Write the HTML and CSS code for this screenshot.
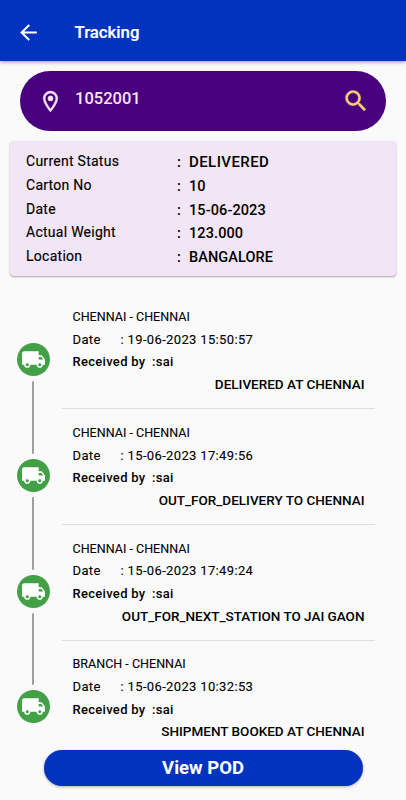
FILE: index.html
```html
<!DOCTYPE html>
<html lang="en">
<head>
<meta charset="utf-8">
<title>Tracking</title>
<link rel="stylesheet" href="styles.css">
</head>
<body>
<svg class="defs" aria-hidden="true">
  <symbol id="truck" viewBox="0 0 24 24"><path d="M20 8h-3V4H3c-1.100 0-2 .9-2 2v11h2c0 1.660 1.340 3 3 3s3-1.340 3-3h6c0 1.660 1.340 3 3 3s3-1.340 3-3h2v-5l-3-4zM6 18.500c-.83 0-1.500-.67-1.500-1.500s.67-1.500 1.500-1.500 1.500.67 1.500 1.500-.67 1.500-1.500 1.500zm13.500-9l1.960 2.500H17V9.500h2.500zM18 18.500c-.83 0-1.500-.67-1.500-1.500s.67-1.500 1.500-1.500 1.500.67 1.500 1.500-.67 1.500-1.500 1.500z"/></symbol>
</svg>
<header class="appbar">
  <svg class="back" viewBox="0 0 24 24"><path d="M20 11H7.830l5.590-5.590L12 4l-8 8 8 8 1.410-1.410L7.830 13H20v-2z"/></svg>
  <h1 class="title">Tracking</h1>
</header>
<div class="search">
  <svg class="pin" viewBox="0 0 24 24"><path d="M12 2C8.130 2 5 5.130 5 9c0 5.250 7 13 7 13s7-7.750 7-13c0-3.870-3.130-7-7-7zM7 9c0-2.760 2.240-5 5-5s5 2.240 5 5c0 2.880-2.880 7.190-5 9.880C9.920 16.210 7 11.850 7 9z"/><circle cx="12" cy="9" r="2.500"/></svg>
  <span class="number">1052001</span>
  <svg class="glass" viewBox="0 0 24 24"><path d="M15.500 14h-.79l-.28-.27C15.410 12.590 16 11.110 16 9.500 16 5.910 13.090 3 9.500 3S3 5.910 3 9.500 5.910 16 9.500 16c1.610 0 3.090-.59 4.230-1.570l.27.28v.79l5 4.990L20.490 19l-4.990-5zm-6 0C7.010 14 5 11.990 5 9.500S7.010 5 9.500 5 14 7.010 14 9.500 11.990 14 9.500 14z"/></svg>
</div>
<section class="card">
  <div class="labels"><div>Current Status</div><div>Carton No</div><div>Date</div><div>Actual Weight</div><div>Location</div></div>
  <div class="values"><div class="status"><i>:</i>DELIVERED</div><div><i>:</i>10</div><div><i>:</i>15-06-2023</div><div><i>:</i>123.000</div><div><i>:</i>BANGALORE</div></div>
</section>
<main class="timeline">
  <div class="rail">
    <div class="node"><svg><use href="#truck"/></svg></div><div class="link"></div>
    <div class="node"><svg><use href="#truck"/></svg></div><div class="link"></div>
    <div class="node"><svg><use href="#truck"/></svg></div><div class="link"></div>
    <div class="node"><svg><use href="#truck"/></svg></div>
  </div>
  <div class="events">
    <article class="event">
      <p class="route">CHENNAI - CHENNAI</p>
      <p class="date"><span>Date</span>: 19-06-2023 15:50:57</p>
      <p class="by"><span>Received by</span>:sai</p>
      <p class="state">DELIVERED AT CHENNAI</p>
    </article>
    <article class="event">
      <p class="route">CHENNAI - CHENNAI</p>
      <p class="date"><span>Date</span>: 15-06-2023 17:49:56</p>
      <p class="by"><span>Received by</span>:sai</p>
      <p class="state">OUT_FOR_DELIVERY TO CHENNAI</p>
    </article>
    <article class="event">
      <p class="route">CHENNAI - CHENNAI</p>
      <p class="date"><span>Date</span>: 15-06-2023 17:49:24</p>
      <p class="by"><span>Received by</span>:sai</p>
      <p class="state">OUT_FOR_NEXT_STATION TO JAI GAON</p>
    </article>
    <article class="event">
      <p class="route">BRANCH - CHENNAI</p>
      <p class="date"><span>Date</span>: 15-06-2023 10:32:53</p>
      <p class="by"><span>Received by</span>:sai</p>
      <p class="state">SHIPMENT BOOKED AT CHENNAI</p>
    </article>
  </div>
</main>
<button class="pod">View POD</button>
</body>
</html>
```
FILE: styles.css
```css
* { box-sizing: border-box; }
body {
  margin: 0;
  height: 800px;
  overflow: hidden;
  display: flex;
  flex-direction: column;
  background: #fafafa;
  color: #000;
  font-family: Roboto, "Liberation Sans", sans-serif;
}
p, h1 { margin: 0; }
svg { display: block; fill: currentColor; flex: none; }
.defs { width: 0; height: 0; position: absolute; }
.appbar {
  flex: none;
  height: 61px;
  display: flex;
  align-items: center;
  padding: 3px 0 0 16.300px;
  background: #0233bf;
  color: #fff;
  box-shadow: 0 1px 4px rgba(0, 0, 0, .4);
}
.back { width: 25px; height: 25px; }
.title { margin-left: 33.200px; font-size: 16.800px; font-weight: 500; line-height: 20px; -webkit-text-stroke: .2px; }
.search {
  flex: none;
  height: 60px;
  margin: 10px 20px 0;
  padding: 0 16.500px 0 18px;
  border-radius: 30px;
  background: #49007f;
  color: #fce4f8;
  display: flex;
  align-items: center;
}
.pin { width: 25px; height: 25px; stroke: currentColor; stroke-width: .3px; }
.number { margin: -5px auto 0 12px; font-size: 16.500px; font-weight: 500; }
.glass { width: 28px; height: 28px; color: #ffcf73; stroke: currentColor; stroke-width: .3px; }
.card {
  flex: none;
  height: 135px;
  margin: 10px 10px 0;
  padding: 8.500px 16px 0;
  border-radius: 4px;
  background: #f2e5f5;
  box-shadow: 0 1px 2px rgba(0, 0, 0, .35);
  display: flex;
  font-size: 14px;
}
.labels { width: 151px; padding-top: .5px; line-height: 23.800px; letter-spacing: .27px; -webkit-text-stroke: .15px; }
.values { line-height: 23.700px; font-size: 14.500px; font-weight: 500; letter-spacing: .1px; }
.values .status { height: 25.500px; line-height: 24px; font-size: 15px; letter-spacing: .42px; }
.values i { display: inline-block; width: 12px; font-style: normal; letter-spacing: 0; }
.timeline { flex: none; display: flex; margin-top: 17.250px; height: 457px; }
.rail { width: 33px; margin-left: 16.500px; padding-top: 49.750px; display: flex; flex-direction: column; align-items: center; }
.node {
  flex: none;
  width: 33px;
  height: 33px;
  border-radius: 50%;
  background: #43a047;
  color: #fff;
  display: flex;
  align-items: center;
  justify-content: center;
}
.node svg { width: 25px; height: 25px; }
.link { flex: none; width: 2.500px; height: 72.750px; margin: 5px 0; border-radius: 1px; background: #9e9e9e; }
.events { width: 313px; margin-left: 12.500px; }
.event {
  height: 115.750px;
  padding: 12.800px 10.500px 0 10.500px;
  border-bottom: 1px solid #dedede;
  font-size: 13px;
  line-height: 22.700px;
}
.event:last-child { border-bottom: 0; }
.event span { display: inline-block; }
.route { font-size: 12.500px; letter-spacing: .02px; -webkit-text-stroke: .1px; }
.date { letter-spacing: .35px; -webkit-text-stroke: .1px; }
.date span { width: 48px; }
.by { font-weight: 500; letter-spacing: .3px; }
.by span { width: 79.500px; }
.state { font-size: 13.500px; font-weight: 500; text-align: right; line-height: 21px; }
.pod {
  flex: none;
  width: 319px;
  height: 36.500px;
  margin: -.7px 0 0 43.500px;
  padding: 0;
  border: 0;
  border-radius: 19px;
  background: #0233bf;
  color: #fff;
  font: 700 18.500px/37px Roboto, "Liberation Sans", sans-serif;
  box-shadow: 0 1px 3px rgba(0, 0, 0, .3);
}
```
